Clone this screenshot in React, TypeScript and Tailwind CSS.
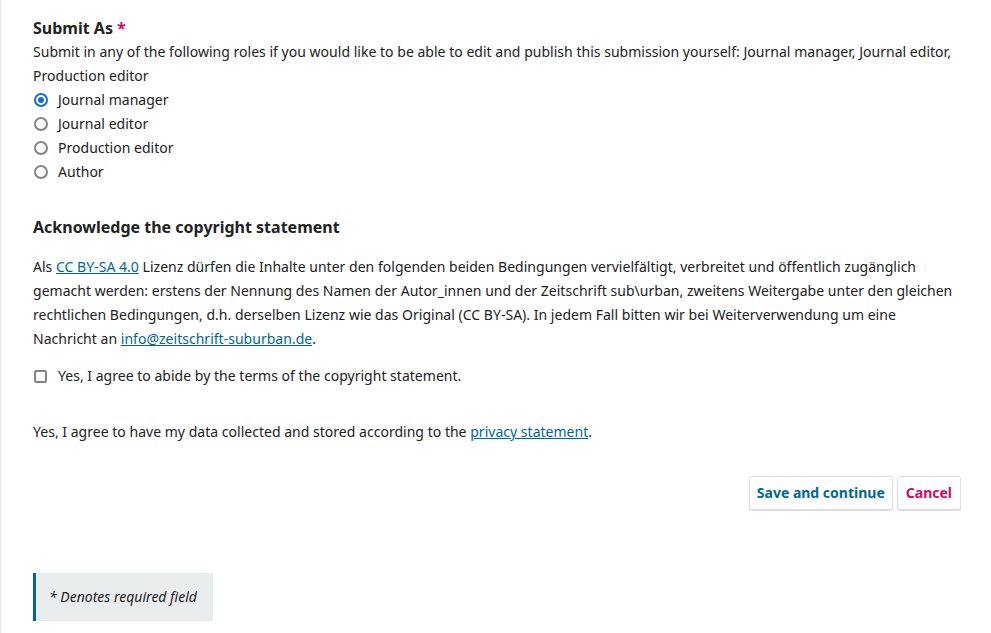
import React, { useState } from "react";

function Radio({ checked }: { checked: boolean }) {
  return (
    <span
      className={
        "ml-[1px] flex h-[14px] w-[14px] shrink-0 items-center justify-center rounded-full border-[2px] bg-white " +
        (checked ? "border-[#1a6ad8]" : "border-[#858585]")
      }
    >
      {checked && <span className="h-[6px] w-[6px] rounded-full bg-[#1a6ad8]" />}
    </span>
  );
}

export default function App() {
  const roles = ["Journal manager", "Journal editor", "Production editor", "Author"];
  const [sel, setSel] = useState(0);
  const [agree, setAgree] = useState(false);
  return (
    <div
      className="min-h-[633px] w-[991px] border-l border-[#e5e5e5] bg-white pl-[32px] pr-[30px] text-[14px] leading-[24px] tracking-[0.02px] text-[#222]"
      style={{ fontFamily: '"Noto Sans", sans-serif' }}
    >
      <div className="pt-[16px]">
        <div className="text-[16px] font-bold leading-[24px] tracking-normal text-[#222]">
          Submit As <span className="text-[#d00a6c]">*</span>
        </div>
        <div>
          Submit in any of the following roles if you would like to be able to edit and publish this submission yourself: Journal manager, Journal editor, Production editor
        </div>
        <div className="flex flex-col">
          {roles.map((r, i) => (
            <label key={r} className="flex h-[24px] cursor-pointer items-center" onClick={() => setSel(i)}>
              <Radio checked={sel === i} />
              <span className="ml-[10px]">{r}</span>
            </label>
          ))}
        </div>
      </div>

      <div className="mt-[31px] text-[16px] font-bold leading-[24px] tracking-normal">
        Acknowledge the copyright statement
      </div>
      <p className="mt-[16px] max-w-[924px]">
        Als{" "}
        <a href="#" className="text-[#006798] underline">
          CC BY-SA 4.0
        </a>{" "}
        Lizenz dürfen die Inhalte unter den folgenden beiden Bedingungen vervielfältigt, verbreitet und öffentlich zugänglich gemacht werden: erstens der Nennung des Namen der Autor_innen und der Zeitschrift sub\urban, zweitens Weitergabe unter den gleichen rechtlichen Bedingungen, d.h. derselben Lizenz wie das Original (CC BY-SA). In jedem Fall bitten wir bei Weiterverwendung um eine Nachricht an{" "}
        <a href="#" className="text-[#006798] underline">
          info@zeitschrift-suburban.de
        </a>
        .
      </p>
      <label className="mt-[13px] flex h-[24px] cursor-pointer items-center" onClick={() => setAgree(!agree)}>
        <span
          className={
            "ml-[1px] flex h-[13px] w-[13px] shrink-0 items-center justify-center rounded-[2px] border-[2px] " +
            (agree ? "border-[#1a6ad8] bg-[#1a6ad8]" : "border-[#858585] bg-white")
          }
        />
        <span className="ml-[11px]">Yes, I agree to abide by the terms of the copyright statement.</span>
      </label>

      <p className="mt-[32px]">
        Yes, I agree to have my data collected and stored according to the{" "}
        <a href="#" className="text-[#006798] underline">
          privacy statement
        </a>
        .
      </p>

      <div className="mt-[32px] flex justify-end gap-[4px]">
        <button className="h-[34px] rounded-[3px] border border-[#ddd] bg-white px-[7px] text-[14px] font-bold tracking-normal text-[#006798] shadow-[0_1px_0_#ddd]">
          Save and continue
        </button>
        <button className="h-[34px] rounded-[3px] border border-[#ddd] bg-white px-[8px] text-[14px] font-bold tracking-normal text-[#d00a6c] shadow-[0_1px_0_#ddd]">
          Cancel
        </button>
      </div>

      <div className="mt-[63px] flex h-[48px] w-[180px] items-center border-l-[3px] border-[#006798] bg-[#eaedee] pl-[13px] italic tracking-normal">
        * Denotes required field
      </div>
    </div>
  );
}
